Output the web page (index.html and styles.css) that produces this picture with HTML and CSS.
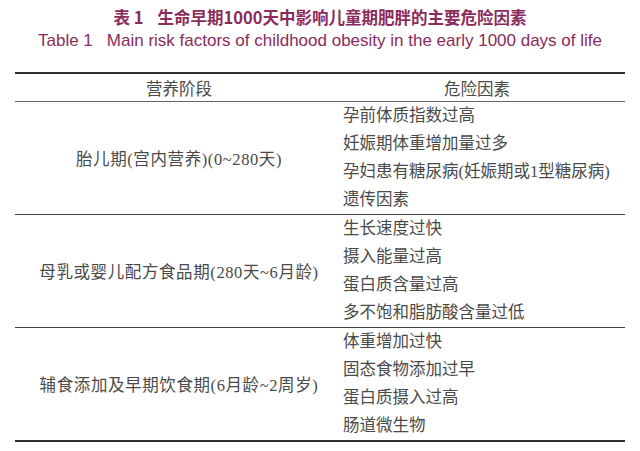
FILE: index.html
```html
<!DOCTYPE html>
<html lang="zh">
<head>
<meta charset="utf-8">
<link rel="stylesheet" href="styles.css">
</head>
<body>
<div class="page">
  <div class="title-cn"><span class="tno">表 1</span>生命早期1000天中影响儿童期肥胖的主要危险因素</div>
  <div class="title-en"><span class="tno-en">Table 1</span>Main risk factors of childhood obesity in the early 1000 days of life</div>
  <div class="table">
    <div class="row head">
      <div class="c1">营养阶段</div>
      <div class="c2 hc">危险因素</div>
    </div>
    <div class="row group">
      <div class="c1">胎儿期(宫内营养)(0~280天)</div>
      <div class="c2">
        <div class="line">孕前体质指数过高</div>
        <div class="line">妊娠期体重增加量过多</div>
        <div class="line">孕妇患有糖尿病(妊娠期或1型糖尿病)</div>
        <div class="line">遗传因素</div>
      </div>
    </div>
    <div class="row group">
      <div class="c1">母乳或婴儿配方食品期(280天~6月龄)</div>
      <div class="c2">
        <div class="line">生长速度过快</div>
        <div class="line">摄入能量过高</div>
        <div class="line">蛋白质含量过高</div>
        <div class="line">多不饱和脂肪酸含量过低</div>
      </div>
    </div>
    <div class="row group last">
      <div class="c1">辅食添加及早期饮食期(6月龄~2周岁)</div>
      <div class="c2">
        <div class="line">体重增加过快</div>
        <div class="line">固态食物添加过早</div>
        <div class="line">蛋白质摄入过高</div>
        <div class="line">肠道微生物</div>
      </div>
    </div>
  </div>
</div>
</body>
</html>
```
FILE: styles.css
```css
html, body {
  margin: 0;
  padding: 0;
  background: #ffffff;
}
.page {
  width: 640px;
  height: 451px;
  overflow: hidden;
  padding-top: 6px;
  box-sizing: border-box;
}
.title-cn {
  text-align: center;
  font-family: "Noto Sans CJK SC", "Liberation Sans", sans-serif;
  font-weight: 700;
  font-size: 16.5px;
  line-height: 22px;
  color: #8a2b5c;
}
.tno {
  margin-right: 14px;
}
.title-en {
  text-align: center;
  font-family: "Liberation Sans", "Noto Sans CJK SC", sans-serif;
  font-size: 17px;
  line-height: 24px;
  color: #8a2b5c;
  margin-top: 1px;
}
.tno-en {
  margin-right: 14px;
}
.table {
  margin: 19px 15px 0 15px;
  border-top: 2px solid #2e2e2e;
  border-bottom: 2px solid #2e2e2e;
  font-family: "Liberation Serif", "Noto Sans CJK SC", serif;
  font-size: 16.5px;
  color: #4a4a4a;
}
.row {
  display: flex;
  align-items: center;
}
.head {
  height: 27px;
  border-bottom: 1.5px solid #666;
}
.group {
  height: 113px;
  border-bottom: 1px solid #444;
  box-sizing: border-box;
}
.group.last {
  height: 112px;
  border-bottom: none;
}
.c1 {
  width: 328px;
  text-align: center;
}
.group .c1 {
  letter-spacing: 0.6px;
}
.c2 {
  flex: 1;
}
.hc {
  text-align: center;
  padding-right: 14px;
}
.line {
  line-height: 28px;
}
```
